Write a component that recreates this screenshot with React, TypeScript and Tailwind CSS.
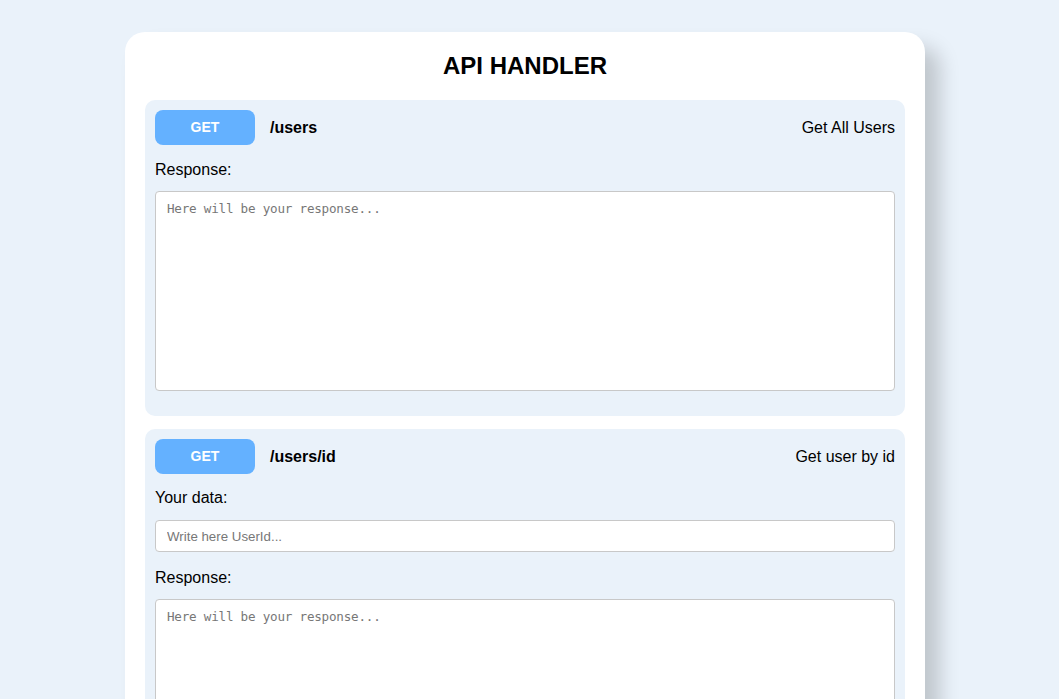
import { useState } from 'react';

type Endpoint = {
  method: string;
  path: string;
  title: string;
  inputPlaceholder?: string;
};

const endpoints: Endpoint[] = [
  { method: 'GET', path: '/users', title: 'Get All Users' },
  { method: 'GET', path: '/users/id', title: 'Get user by id', inputPlaceholder: 'Write here UserId...' },
];

const EndpointCard = ({ endpoint }: { endpoint: Endpoint }) => {
  const [value, setValue] = useState('');

  return (
    <div className="bg-[#eaf2fa] rounded-[10px] px-[10px] pt-[10px] pb-[25px]">
      {/* Method, path and description */}
      <div className="flex items-center h-[35px]">
        <button className="w-[100px] h-[35px] rounded-[8px] bg-[#64b1ff] text-white text-[14px] font-bold">
          {endpoint.method}
        </button>
        <span className="ml-[15px] text-[16px] font-bold text-black">{endpoint.path}</span>
        <span className="ml-auto text-[16px] text-black">{endpoint.title}</span>
      </div>

      {endpoint.inputPlaceholder && (
        <>
          <div className="mt-[15px] text-[16px] leading-[18px] text-black">Your data:</div>
          <input
            type="text"
            value={value}
            onChange={(e) => setValue(e.target.value)}
            placeholder={endpoint.inputPlaceholder}
            className="mt-[13px] block w-full h-[32px] bg-white border border-[#c8c8c8] rounded-[4px] px-[11px] text-[13.3px] placeholder:text-[#777] focus:outline-none"
          />
        </>
      )}

      <div className={`${endpoint.inputPlaceholder ? 'mt-[17px]' : 'mt-[16px]'} text-[16px] leading-[18px] text-black`}>
        Response:
      </div>
      <textarea
        readOnly
        placeholder="Here will be your response..."
        className="mt-[12px] block w-full h-[200px] bg-white border border-[#c8c8c8] rounded-[4px] px-[11px] py-[8px] text-[12.6px] tracking-[-0.22px] resize-none placeholder:text-[#777] focus:outline-none"
        style={{ fontFamily: '"DejaVu Sans Mono", "Liberation Mono", monospace' }}
      />
    </div>
  );
};

const App = () => {
  return (
    <div
      className="min-h-screen bg-[#eaf2fa] pt-[32px] pb-[40px] flex justify-center pr-[9px]"
      style={{ fontFamily: '"Liberation Sans", Arial, sans-serif' }}
    >
      <div className="w-[800px] bg-white rounded-[20px] px-[20px] pt-[20px] pb-[20px] shadow-[15px_15px_20px_rgba(0,0,0,0.18)]">
        <h1 className="text-center text-[24px] leading-[28px] font-bold text-black mb-[20px]">API HANDLER</h1>
        <div className="flex flex-col gap-[13px]">
          {endpoints.map((ep) => (
            <EndpointCard key={ep.path} endpoint={ep} />
          ))}
        </div>
      </div>
    </div>
  );
};

export default App;
